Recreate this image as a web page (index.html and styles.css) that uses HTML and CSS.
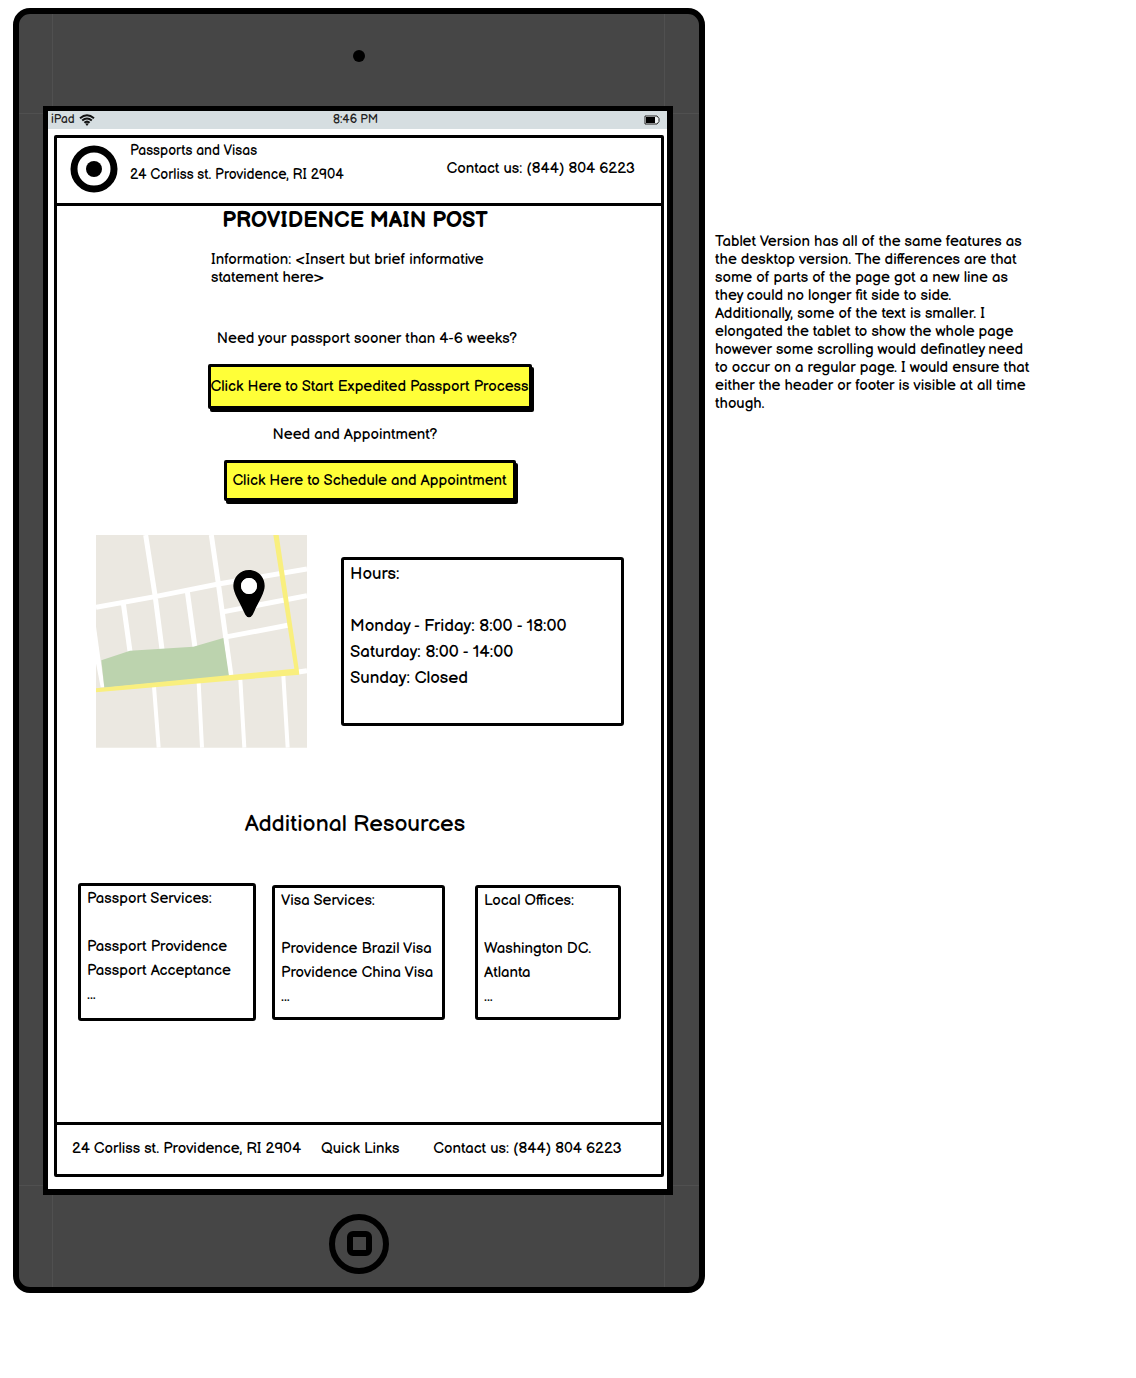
FILE: index.html
```html
<!DOCTYPE html>
<html lang="en">
<head>
<meta charset="utf-8">
<meta name="viewport" content="width=device-width, initial-scale=1">
<title>Providence Main Post – Tablet</title>
<link rel="stylesheet" href="styles.css">
</head>
<body>
<div class="board">
  <div class="tablet">
    <div class="camera"></div>
    <div class="screen">
      <div class="status">
        <span class="carrier">iPad
          <svg class="wifi" viewBox="0 0 16 12" aria-hidden="true">
            <g fill="none" stroke="#111" stroke-width="2"><path d="M1 4.2Q8-1.6 15 4.2"/><path d="M3.2 6.6Q8 2.4 12.800 6.600"/><path d="M5.400 8.800Q8 6.400 10.600 8.800"/></g>
            <path d="M6.300 9.700Q8 8.600 9.700 9.700L8 12Z" fill="#111"/>
          </svg>
        </span>
        <span>8:46 PM</span>
        <svg class="battery" viewBox="0 0 16 10" aria-hidden="true">
          <path d="M1 1H13L15 3.500V6.500L13 9H1Z" fill="#eef2f3" stroke="#222" stroke-width="1"/>
          <rect x="2" y="2" width="9" height="6"/>
        </svg>
      </div>
      <div class="page">
        <header class="header">
          <svg class="logo" viewBox="0 0 48 48" aria-hidden="true">
            <circle cx="24" cy="24" r="20" fill="#fff" stroke="#000" stroke-width="7"/>
            <circle cx="24" cy="24" r="8"/>
          </svg>
          <div class="brand">
            <div>Passports and Visas</div>
            <div>24 Corliss st. Providence, RI 2904</div>
          </div>
          <a class="phone" href="tel:8448046223">Contact us: (844) 804 6223</a>
        </header>
        <main class="main">
          <h1>PROVIDENCE MAIN POST</h1>
          <p class="info">Information: &lt;Insert but brief informative statement here&gt;</p>
          <p class="question sooner">Need your passport sooner than 4-6 weeks?</p>
          <div class="action"><button class="cta wide" type="button">Click Here to Start Expedited Passport Process</button></div>
          <p class="question">Need and Appointment?</p>
          <div class="action"><button class="cta" type="button">Click Here to Schedule and Appointment</button></div>
        </main>
        <section class="visit">
          <svg class="map" viewBox="48 45 633 638" role="img" aria-label="Map of the office">
            <path fill="#ebe8e1" d="M48 45h633v638H48z"/>
            <path fill="#fff" d="M48 320L73 502H62L48 430Z"/>
            <g fill="none" stroke="#fff" stroke-width="15">
              <path d="M197 45L225 225L246 388M394 45L415 190L453 468M48 262L225 230L415 192L681 147M130 250L150 394M322 215L345 382M433 275L681 227M443 350L623 316M655 456L681 452"/>
              <path stroke-width="12" d="M222 500L236 683M356 488L366 683M481 478L493 683M610 466L623 683"/>
            </g>
            <path fill="#bcd3ae" d="M64 421L150 392L340 380L430 354L447 468L73 503Z"/>
            <path fill="#f9ef7e" d="M580 45H596L656 446L658 464L48 517V505L643 446Z"/>
            <path fill-rule="evenodd" d="M507 150C480 150 460 171 460 198C460 219 478 244 496 284Q501 292 507 292Q513 292 518 284C536 244 554 219 554 198C554 171 534 150 507 150ZM507 174A24 24 0 1 1 507 222A24 24 0 1 1 507 174Z"/>
            <circle cx="507" cy="198" r="24" fill="#fff"/>
          </svg>
          <div class="box hours">
            <h2>Hours:</h2>
            <p>Monday - Friday: 8:00 - 18:00</p>
            <p>Saturday: 8:00 - 14:00</p>
            <p>Sunday: Closed</p>
          </div>
        </section>
        <h2 class="resources-title">Additional Resources</h2>
        <section class="resources">
          <div class="box card">
            <h3>Passport Services:</h3>
            <a href="#providence">Passport Providence</a>
            <a href="#acceptance">Passport Acceptance</a>
            <span>...</span>
          </div>
          <div class="box card lower">
            <h3>Visa Services:</h3>
            <a href="#brazil">Providence Brazil Visa</a>
            <a href="#china">Providence China Visa</a>
            <span>...</span>
          </div>
          <div class="box card lower inset">
            <h3>Local Offices:</h3>
            <a href="#washington">Washington DC.</a>
            <a href="#atlanta">Atlanta</a>
            <span>...</span>
          </div>
        </section>
        <footer class="footer">
          <span>24 Corliss st. Providence, RI 2904</span>
          <a href="#links">Quick Links</a>
          <a class="footer-phone" href="tel:8448046223">Contact us: (844) 804 6223</a>
        </footer>
      </div>
    </div>
    <button class="home" type="button" aria-label="Home"><span></span></button>
  </div>
  <aside class="note">Tablet Version has all of the same features as the desktop version. The differences are that some of parts of the page got a new line as they could no longer fit side to side. Additionally, some of the text is smaller. I elongated the tablet to show the whole page however some scrolling would definatley need to occur on a regular page. I would ensure that either the header or footer is visible at all time though.</aside>
</div>
</body>
</html>
```
FILE: styles.css
```css
* { box-sizing: border-box; }

body {
  margin: 0;
  background: #fff;
  color: #000;
  font-family: "Balsamiq Sans", Inter, "Liberation Sans", sans-serif;
  font-feature-settings: "cv11", "cv08";
  font-size: 15px;
  line-height: 18px;
}

h1, h2, h3, p { margin: 0; font-weight: 400; }
a { color: inherit; text-decoration: none; }
button { font: inherit; font-feature-settings: inherit; color: inherit; padding: 0; cursor: pointer; }
svg { display: block; }

.board {
  display: grid;
  grid-template-columns: minmax(0, 692fr) minmax(0, 431fr);
  align-items: start;
  padding: 8px 0 84px 13px;
}

/* Device */
.tablet {
  display: flex;
  flex-direction: column;
  align-items: center;
  padding: 36px 26px 13px 24px;
  border: 6px solid #000;
  border-radius: 17px;
  background:
    linear-gradient(#505050, #505050) 33px 0 / 1px 100% no-repeat,
    linear-gradient(#505050, #505050) right 34px top 0 / 1px 100% no-repeat,
    linear-gradient(#505050, #505050) 0 99px / 100% 1px no-repeat,
    linear-gradient(#505050, #505050) left 0 bottom 101px / 100% 1px no-repeat,
    #464646;
}
.camera { width: 12px; height: 12px; border-radius: 50%; background: #000; margin: 0 0 44px 2px; }
.screen { align-self: stretch; border: 6px solid #000; border-width: 5px 6px 6px 5px; background: #fff; padding-bottom: 12px; }
.home {
  display: grid;
  place-items: center;
  width: 60px;
  height: 60px;
  margin: 19px 0 0 2px;
  border: 6px solid #000;
  border-radius: 50%;
  background: transparent;
}
.home span { width: 25px; height: 25px; border: 6px solid #000; border-radius: 6px; }

.status {
  display: grid;
  grid-template-columns: 1fr auto 1fr;
  align-items: center;
  padding: 0 7px 0 3px;
  background: #d6dee1;
  font-size: 12px;
  color: #222;
}
.carrier { display: flex; align-items: center; gap: 4px; }
.wifi { width: 16px; height: 12px; }
.battery { width: 16px; height: 10px; justify-self: end; }

/* Page */
.page { margin: 6px 3px 0 6px; border: 3px solid #000; border-radius: 2px; }
.header { display: flex; align-items: center; padding: 0 26px 3px 13px; border-bottom: 3px solid #000; }
.logo { width: 48px; height: 48px; flex: none; margin: 7px 0; }
.brand { align-self: flex-start; margin: 1px auto 0 12px; font-size: 14px; line-height: 24px; }

.main { display: flex; flex-direction: column; align-items: center; padding: 1px 8px 0 0; }
h1 { font-size: 22px; line-height: 28px; font-weight: 700; }
.info { width: 288px; margin: 16px 0 43px; }
.sooner { padding-left: 24px; }
.action { padding: 16px 0 17px 29px; }
.cta {
  display: block;
  width: 292px;
  height: 41px;
  border: 3px solid #000;
  border-radius: 2px;
  background: #ffff38;
  box-shadow: 2px 3px 0 #000;
  white-space: nowrap;
}
.wide { width: 324px; height: 45px; }

.box { border: 3px solid #000; border-radius: 3px; }
.visit { display: grid; grid-template-columns: 211fr 283fr; gap: 34px; align-items: center; padding: 17px 37px 0 39px; }
.map { width: 100%; }
.hours { padding: 1px 6px 32px; font-size: 17px; line-height: 26px; }
.hours h2 { font-size: 17px; margin-bottom: 26px; }

.resources-title { font-size: 23px; line-height: 28px; text-align: center; padding: 62px 8px 45px 0; }
.resources { display: grid; grid-template-columns: 178fr 173fr 160fr; gap: 16px; align-items: start; padding: 0 40px 101px 21px; }
.card { display: flex; flex-direction: column; padding: 1px 0 11px 6px; line-height: 24px; white-space: nowrap; }
.card h3 { font-size: 15px; margin-bottom: 24px; }
.lower { margin-top: 2px; padding-bottom: 8px; }
.inset { margin-left: 14px; }

.footer { display: flex; gap: 20px; padding: 15px 15px 16px; border-top: 3px solid #000; }
.footer-phone { margin-left: 14px; }

.note { max-width: 326px; margin-top: 225px; padding-left: 10px; }
```
